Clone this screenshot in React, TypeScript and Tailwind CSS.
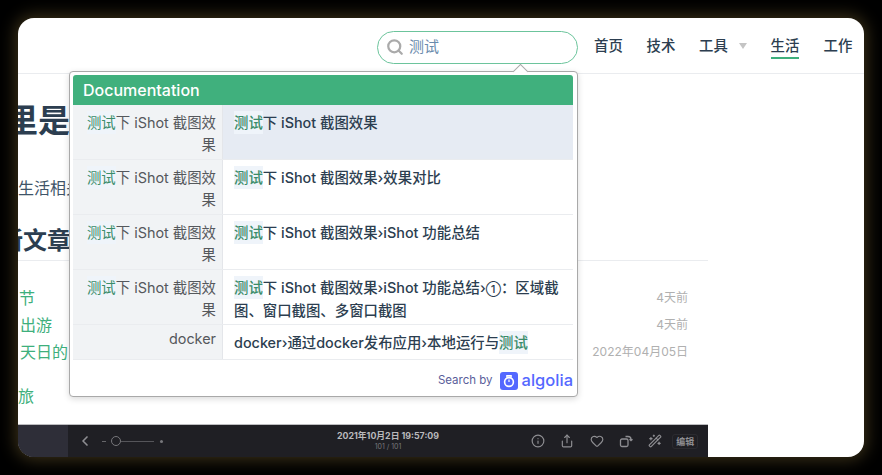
import { Heart, Info, Share, WandSparkles, ChevronLeft, Search } from "lucide-react"

const font = "font-['Inter','Noto_Sans_CJK_SC',sans-serif]"

function Hl({ children }: { children: string }) {
  return <span className="bg-[#eff4fa] py-[3px] text-[#3a8c6a]">{children}</span>
}

const hit = "下 iShot 截图效果"

function Row({ selected, children }: { selected?: boolean; children?: React.ReactNode }) {
  return (
    <div className="flex h-[55px] border-b border-[#eaecef] text-[14.4px] leading-[22px]">
      <div className="w-[150px] shrink-0 border-r border-[#e4e6ea] bg-[#f1f3f5] pl-[10px] pr-[6px] pt-[7px] text-right text-[#55585c]">
        <Hl>测试</Hl>下 iShot 截图效果
      </div>
      <div className={`flex-1 pl-[11px] pr-[12px] pt-[7px] font-medium text-[#2c3e50] ${selected ? "bg-[#e6ebf3]" : "bg-white"}`}>
        <Hl>测试</Hl>
        {hit}
        {children}
      </div>
    </div>
  )
}

function DocSearch() {
  return (
    <div className="absolute left-[51px] top-[53px] z-10 h-[326px] w-[509px] rounded-[4px] border border-[#a9a9a9] bg-white p-[3px] pr-[4px] shadow-[0_2px_6px_rgba(0,0,0,0.15)]">
      {/* little arrow under the search box */}
      <div className="absolute left-[445px] top-[-6px] h-[11px] w-[11px] rotate-45 border-l border-t border-[#a9a9a9] bg-white"></div>
      <div className="relative flex h-[30px] items-center rounded-t-[3px] bg-[#40b07d] pl-[10px] text-[16px] font-medium text-white">
        Documentation
      </div>
      <Row selected />
      <Row>›效果对比</Row>
      <Row>›iShot 功能总结</Row>
      <Row>
        ›iShot 功能总结›<span className="text-[11px]">①</span>：区域截图、窗口截图、多窗口截图
      </Row>
      <div className="flex h-[35px] border-b border-[#eaecef] text-[14.4px] leading-[22px]">
        <div className="w-[150px] shrink-0 border-r border-[#e4e6ea] bg-[#f1f3f5] pr-[6px] pt-[3px] text-right text-[#55585c]">docker</div>
        <div className="flex-1 pl-[11px] pt-[7px] font-medium text-[#2c3e50]">
          docker›通过docker发布应用›本地运行与<Hl>测试</Hl>
        </div>
      </div>
      <div className="flex h-[36px] items-center justify-end gap-[7px] pt-[5px]">
        <span className="text-[11.5px] text-[#5a5e9a]">Search by</span>
        <div className="flex items-center gap-[4px]">
          <svg width="18" height="18" viewBox="0 0 18 18">
            <rect width="18" height="18" rx="3" fill="#5468ff" />
            <circle cx="9" cy="10" r="4.4" fill="none" stroke="#fff" strokeWidth="1.6" />
            <path d="M9 10V7.6M6.8 3.6h4.4v1.6H6.8z" stroke="#fff" strokeWidth="1.2" fill="none" />
          </svg>
          <span className="text-[16.5px] font-medium leading-none text-[#5468ff]">algolia</span>
        </div>
      </div>
    </div>
  )
}

function NavBar() {
  return (
    <header className="flex h-[56px] shrink-0 items-center border-b border-[#eaecef] pl-[359px] text-[14.4px] text-[#2c3e50]">
      <div className="mt-[4px] flex h-[33px] w-[201px] items-center rounded-full border border-[#6cc49c] pl-[8px] text-[15px] text-[#6a8bad]">
        <Search size={18} strokeWidth={3} className="mt-[-1px] text-[#aaaaaa]" />
        <span className="ml-[5px] mt-[-1px]">测试</span>
      </div>
      <nav className="ml-[16px] flex items-center font-medium">
        <span className="w-[52.5px]">首页</span>
        <span className="w-[52.5px]">技术</span>
        <span className="w-[39.5px]">工具</span>
        <span className="h-0 w-0 border-x-[4px] border-t-[6px] border-x-transparent border-t-[#c4c4c4]"></span>
        <span className="ml-[24px] w-[53px]">
          <span className="inline-block border-b-2 border-[#3eaf7c] pb-[1px] pt-[3px] leading-[20px]">生活</span>
        </span>
        <span>工作</span>
      </nav>
    </header>
  )
}

function RotateIcon() {
  return (
    <svg width="14" height="14" viewBox="0 0 14 14" fill="none" stroke="currentColor" strokeWidth="1.3">
      <rect x="1.5" y="5" width="7.5" height="7.5" rx="1.5" />
      <path d="M6.5 2.5h2.5a3 3 0 0 1 3 3v1M10.5 5.2l1.5 1.5 1.5-1.5" />
    </svg>
  )
}

function PhotoBar() {
  return (
    <div className="flex h-[33px] w-[690px] shrink-0 items-center border-t border-[#bdbdc0] bg-[#1f1f24] text-[#8e8e92]">
      <div className="h-full w-[50px] bg-[#2e2e38]"></div>
      <ChevronLeft size={16} strokeWidth={2.5} className="ml-[9px]" />
      <div className="ml-[9px] flex items-center">
        <span className="h-px w-[4px] bg-[#66666a]"></span>
        <span className="ml-[5px] h-[10px] w-[10px] rounded-full border border-[#77777b]"></span>
        <span className="h-px w-[33px] bg-[#55555a]"></span>
        <span className="ml-[6px] h-[3px] w-[3px] rounded-full bg-[#77777b]"></span>
      </div>
      <div className="ml-[173px] w-[104px] text-center leading-none">
        <div className="text-[8.8px] font-bold text-[#b9b9bc]">2021年10月2日 19:57:09</div>
        <div className="mt-[2px] text-[7px] text-[#77777b]">101 / 101</div>
      </div>
      <div className="ml-[91px] flex items-center gap-[15.3px]">
        <Info size={14} />
        <Share size={14} />
        <Heart size={14} />
        <RotateIcon />
        <WandSparkles size={14} />
      </div>
      <span className="ml-[10px] rounded-[3px] border border-[#2b2b30] px-[3px] py-[2px] text-[9px] font-bold leading-none">编辑</span>
    </div>
  )
}

export default function App() {
  return (
    <div className={`h-[475px] w-[882px] overflow-hidden bg-black p-[18px] ${font}`}>
      <div className="relative flex h-[439px] w-[846px] flex-col overflow-hidden rounded-[16px] bg-white shadow-[0_0_16px_3px_#3a3018]">
        <NavBar />
        <DocSearch />
        <main className="flex-1 overflow-hidden text-[16px] text-[#2c3e50]">
          <h1 className="ml-[-44px] mt-[27px] text-[32px] font-bold leading-[40px]">这里是</h1>
          <p className="mt-[35px] leading-[24px] text-[#3f5468]">生活相关</p>
          <div className="ml-[-43px] mt-[26px] flex h-[35px] w-[733px] items-start border-b border-[#eaecef] text-[24px] font-bold leading-[30px]">
            最新文章
          </div>
          <ul className="mt-[23px] flex w-[670px] flex-col text-[16px] text-[#3eaf7c]">
            <li className="flex h-[27px] items-center justify-between pl-px">
              <span>节</span>
              <span className="text-[12px] text-[#b0b0b0]">4天前</span>
            </li>
            <li className="flex h-[27px] items-center justify-between pl-[2px]">
              <span>出游</span>
              <span className="text-[12px] text-[#b0b0b0]">4天前</span>
            </li>
            <li className="flex h-[27px] items-center justify-between pl-[2px]">
              <span>天日的</span>
              <span className="text-[12px] text-[#b0b0b0]">2022年04月05日</span>
            </li>
            <li className="mt-[17px] flex h-[27px] items-center">旅</li>
          </ul>
        </main>
        <PhotoBar />
      </div>
    </div>
  )
}
